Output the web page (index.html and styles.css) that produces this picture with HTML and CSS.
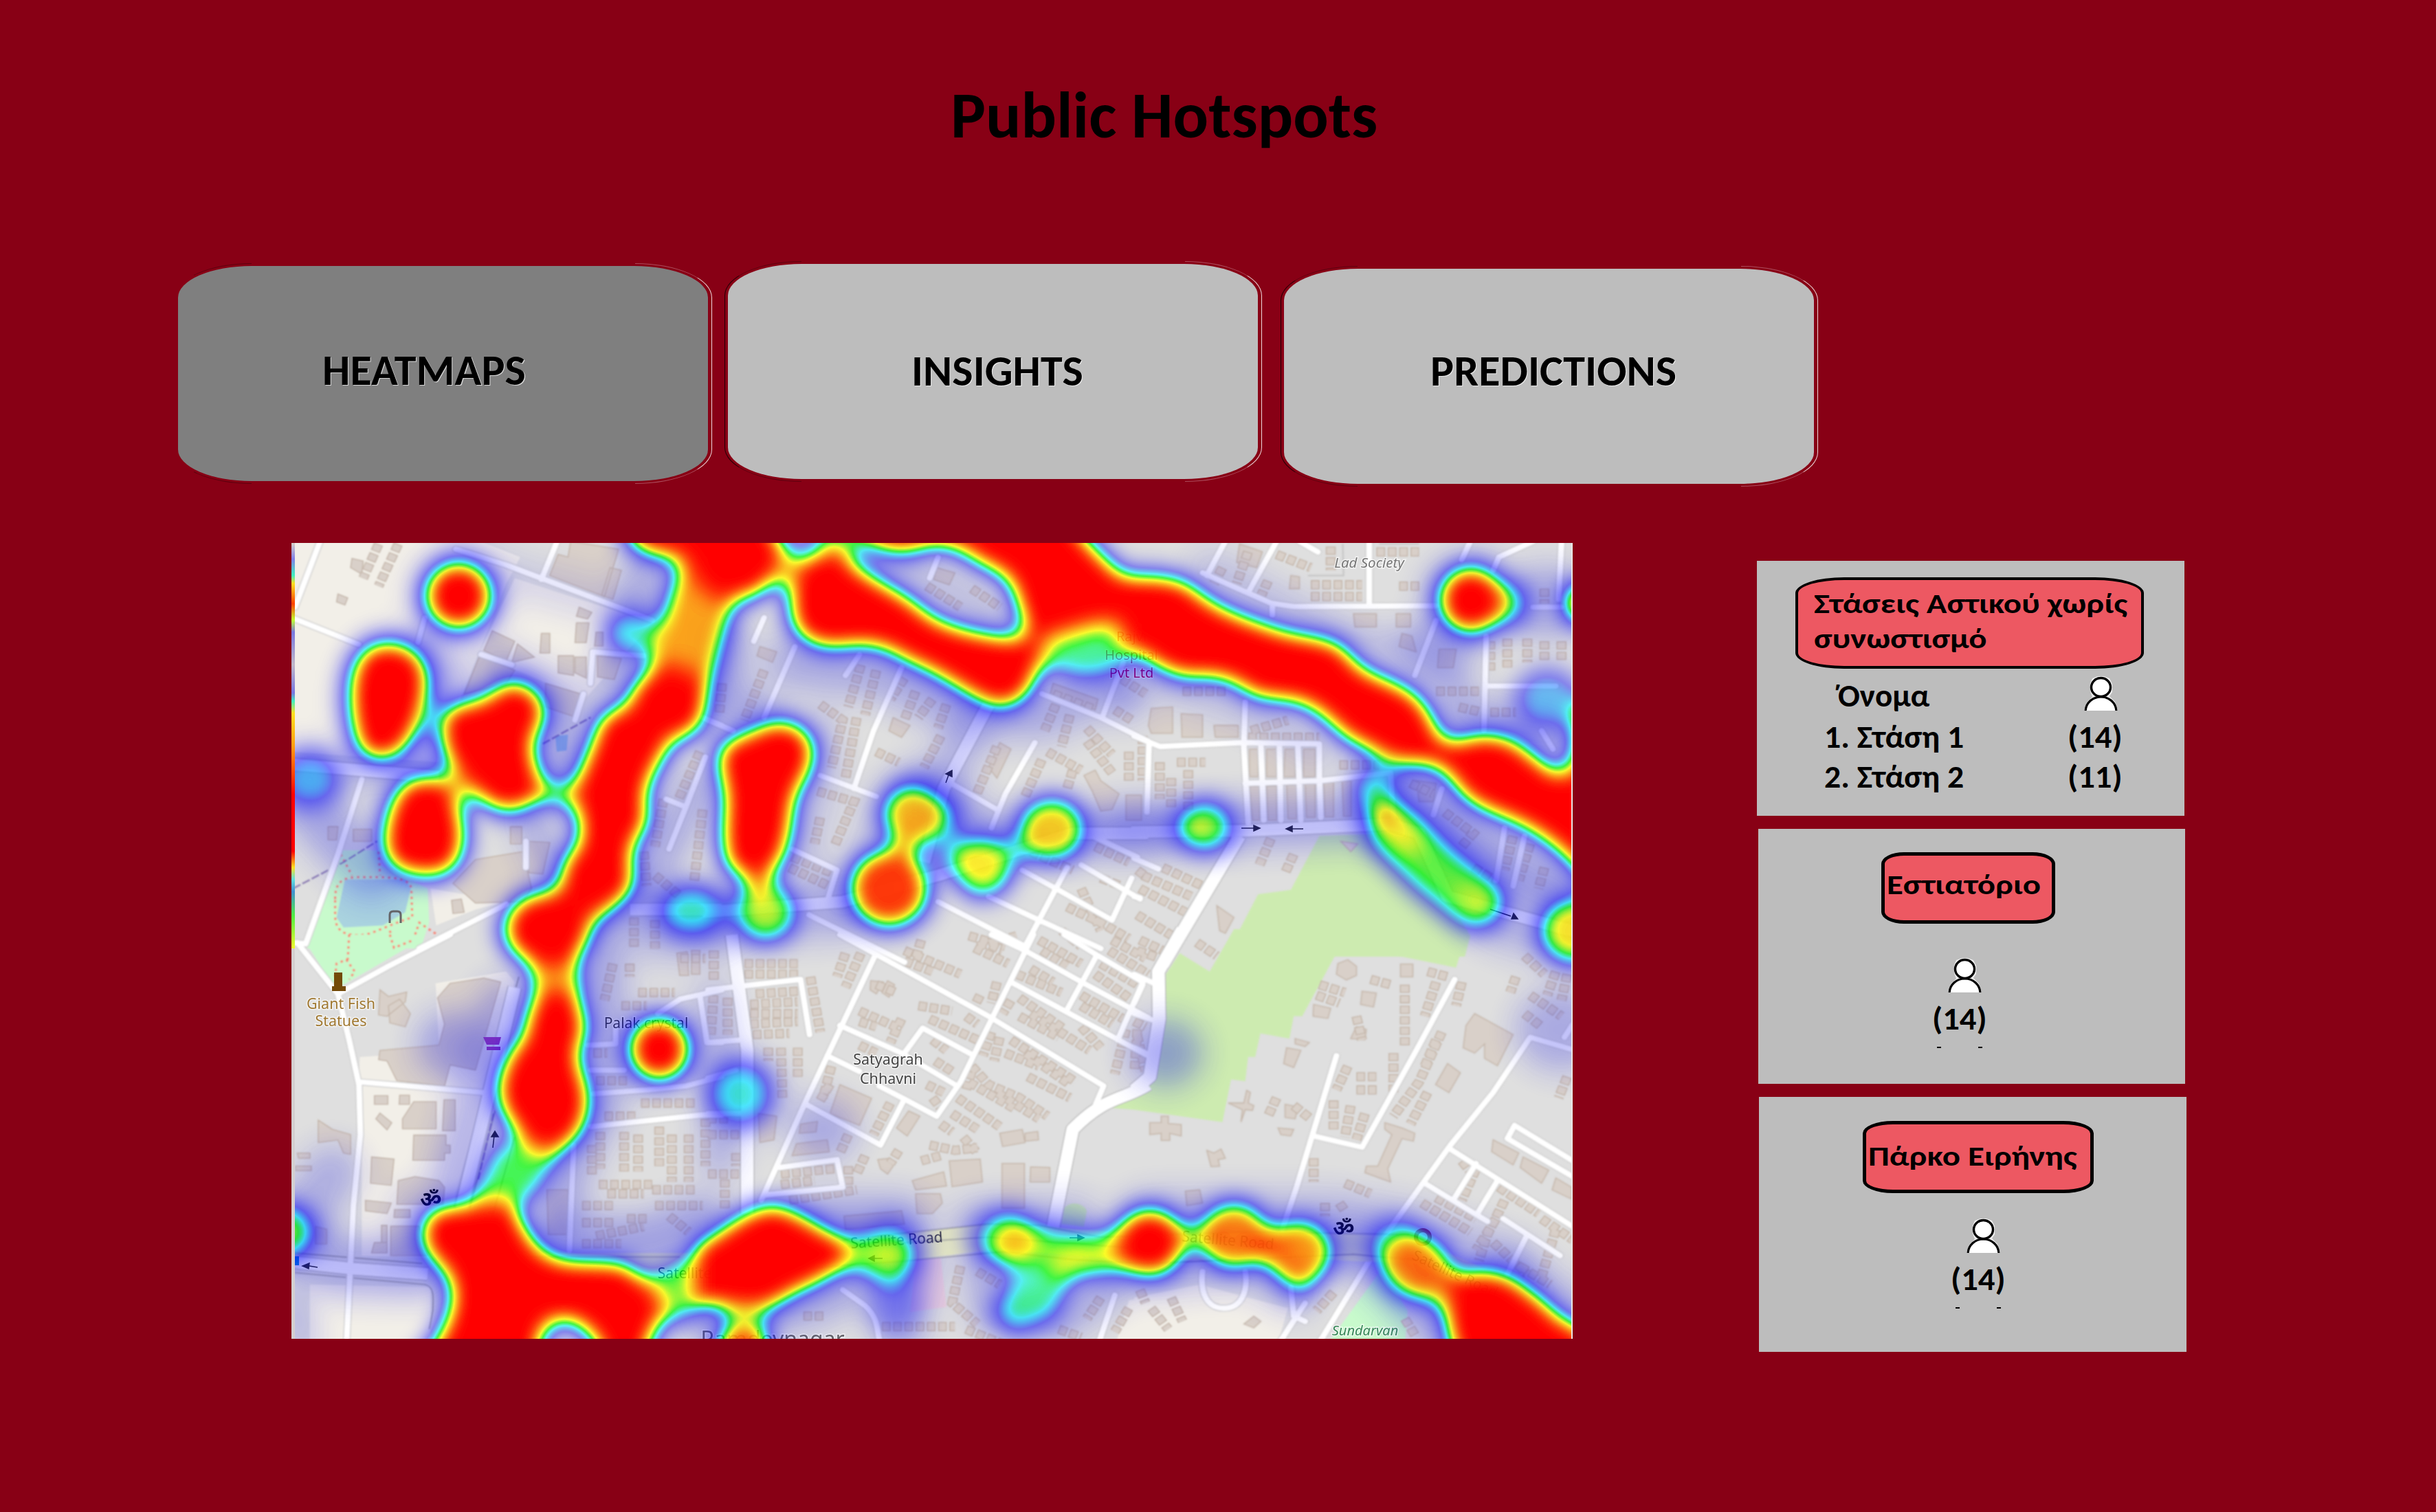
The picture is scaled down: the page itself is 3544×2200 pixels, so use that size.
FILE: index.html
```html
<!DOCTYPE html>
<html lang="el">
<head>
<meta charset="utf-8">
<title>Public Hotspots</title>
<link rel="stylesheet" href="styles.css">
</head>
<body>
<svg class="sprite" width="0" height="0" aria-hidden="true">
  <symbol id="person" viewBox="0 0 49 50">
    <path d="M9 10 L12 3 L20 0 H29 L37 3 L41 11 L41 23 L37 29 L45 37 L49 50 H0 L4 38 L12 30 L9 22Z" fill="#fff" opacity=".75"/>
    <path d="M2 52 C2 38 13 30 24.500 30 S47 38 47 52Z" fill="#fff" stroke="#000" stroke-width="3.200"/>
    <ellipse cx="24.500" cy="16" rx="14" ry="13.500" fill="#fff" stroke="#000" stroke-width="3.400"/>
  </symbol>
</svg>

<header class="header"><h1 class="title"><span class="wide-title">Public Hotspots</span></h1></header>

<nav class="tabs">
  <button class="tab tab-heatmaps"><span>HEATMAPS</span></button>
  <button class="tab tab-insights"><span>INSIGHTS</span></button>
  <button class="tab tab-predictions"><span>PREDICTIONS</span></button>
</nav>

<main class="content">
<svg class="map" viewBox="0 0 1864 1158" width="1864" height="1158">
  <defs>
    <filter id="heat" x="0" y="0" width="1864" height="1158" filterUnits="userSpaceOnUse" color-interpolation-filters="sRGB">
      <feGaussianBlur stdDeviation="16"/>
      <feColorMatrix values="0 0 0 1 0  0 0 0 1 0  0 0 0 1 0  0 0 0 1 0"/>
      <feComponentTransfer>
        <feFuncR type="table" tableValues="0 0 0 0 0 0 0 0 1 1 1"/>
        <feFuncG type="table" tableValues="0 0 0 0 0 .5 1 1 1 .5 0"/>
        <feFuncB type="table" tableValues="1 1 1 1 1 1 1 0 0 0 0"/>
      </feComponentTransfer>
    </filter>
    <filter id="haze" x="0" y="0" width="1864" height="1158" filterUnits="userSpaceOnUse" color-interpolation-filters="sRGB"><feGaussianBlur stdDeviation="22"/></filter>
    <filter id="soft" x="0" y="0" width="1864" height="1158" filterUnits="userSpaceOnUse"><feGaussianBlur stdDeviation="1"/></filter>
    <linearGradient id="edge" x1="0" y1="0" x2="0" y2="1">
      <stop offset="0" stop-color="#d8d0c8"/><stop offset=".04" stop-color="#8080e8"/><stop offset=".08" stop-color="#40f0c0"/>
      <stop offset=".1" stop-color="#ffe020"/><stop offset=".15" stop-color="#ff4000"/><stop offset=".19" stop-color="#c0ff30"/>
      <stop offset=".22" stop-color="#7878e0"/><stop offset=".3" stop-color="#c0b8c8"/><stop offset=".37" stop-color="#7878e0"/>
      <stop offset=".39" stop-color="#40f0c0"/><stop offset=".42" stop-color="#ffe020"/><stop offset=".5" stop-color="#ffa010"/>
      <stop offset=".62" stop-color="#f00"/><stop offset=".76" stop-color="#f00"/><stop offset=".8" stop-color="#ffe020"/>
      <stop offset=".83" stop-color="#60e0e0"/><stop offset=".86" stop-color="#4090d0"/><stop offset=".92" stop-color="#50f040"/><stop offset="1" stop-color="#f0ff30"/>
    </linearGradient>
    <!-- each quadrant of the map carries its own coordinate grid -->
    <g id="rows">
      <g transform="translate(-14 -10) scale(.4082 .3827)">
        <path d="M345 30 L290 160 M415 30 L345 190"/>
        <path d="M1290 1200 L1300 1330 M1360 1000 L1330 1180 M1500 1040 L1470 1310 M1330 1290 L1420 1370"/>
        <path d="M1490 820 L1410 1010 M1255 1450 V1568 M1330 1460 V1568"/>
      </g>
      <g transform="translate(606 -10) scale(.4082 .3827)">
        <path d="M545 490 L500 650 M600 510 L560 680 M700 540 L650 620 M740 590 L700 700 M800 620 L750 690 M850 640 L820 730"/>
        <path d="M830 760 L770 880 M780 190 L900 270 M940 200 L1040 270 M400 640 L480 700 L440 880 M530 690 L490 920 M600 820 L680 860 M50 560 L40 680 M200 510 L130 700"/>
        <path d="M390 970 L520 1010 L450 1180 M400 1070 L380 1170 M300 1220 L440 1280 M290 1260 L430 1330"/>
        <path d="M1030 800 L950 1000 M1240 640 L1200 740 M1290 680 L1260 800 M1210 820 L1330 890 M1350 730 L1440 830 M1190 850 L1130 990 M1300 890 L1280 960 M1350 780 L1440 900 M1500 820 V930"/>
        <path d="M1150 1200 L1300 1270 M1380 1180 L1500 1240 M1280 1410 L1400 1470 L1500 1530 M930 1520 L1060 1560 M960 1560 L1100 1520 M1260 1500 L1330 1560 M1400 1300 L1470 1330 M1530 1270 L1568 1300 M1330 1340 L1400 1500"/>
        <path d="M1440 520 L1560 600 M1230 600 L1380 660 M1450 660 L1510 700"/>
      </g>
      <g transform="translate(1226 -10) scale(.4145 .3827)">
        <path d="M620 185 H800 M620 230 H800 M690 40 V130 M850 60 H1000 M930 190 H1010 M310 120 L280 180 M400 60 L360 180 M500 70 L620 120 M470 170 L440 240"/>
        <path d="M170 590 H330 M410 740 L540 700 M400 765 H650 M30 760 V930 M90 860 V1000 M150 860 H250 M130 920 V1030 M190 890 V1040"/>
        <path d="M1250 400 V520 M1310 390 V500 M1380 390 V480 M1440 400 V480 M1500 400 V480 M1060 590 H1210 M1140 650 L1220 670 M1250 670 H1340 M1440 200 V260"/>
        <path d="M480 1150 L440 1250 M560 1210 L530 1280 M30 1290 L200 1370 M20 1340 L180 1430 M100 1260 L260 1340 M10 1440 L150 1530"/>
        <path d="M1090 1050 L1190 1130 L1150 1180 M1330 1140 L1300 1270 M1390 1170 L1350 1310 M1440 1260 L1420 1340 M970 940 L1050 980 M720 870 H860 M1190 1260 L1270 1310"/>
      </g>
      <g transform="translate(-14 570) scale(.4082 .3827)">
        <path d="M1420 90 H1510 M1180 110 L1150 250 M1240 110 V160 M1270 220 H1400 M1210 270 H1300 M1110 450 H1160 M1120 555 H1230 M1280 640 H1480 M1150 690 H1260"/>
        <path d="M1220 750 V900 M1270 760 V900 M1345 730 V880 M1135 750 V890 M1105 800 V920 M1130 950 H1320 M1160 985 H1290 M1320 970 H1480 M1070 1030 H1180 M1070 1095 H1190 M1120 1145 L1290 1110 M1070 1175 H1210 M1330 1030 H1500 M1380 1070 L1450 1130 M1230 1080 H1300"/>
        <path d="M1510 700 V880 M1390 760 V940 M1450 760 V940 M1540 60 V170"/>
      </g>
      <g transform="translate(606 570) scale(.4082 .3827)">
        <path d="M490 70 L460 160 M545 70 L490 200 M130 110 H320 M130 150 H330 M170 225 L320 215 M150 265 L320 255 M150 300 H320 M150 340 L320 330 M160 380 L290 375 M365 160 L400 370 M20 230 L10 380 M70 240 V380 M20 60 V180"/>
        <path d="M215 430 V480 M260 430 L265 620 M320 430 V540 M540 290 L690 360 M540 330 L600 350 M690 320 L650 410 M600 190 L670 220 M750 270 L870 290 M790 320 L960 400 M920 310 L960 340 M700 60 L900 150 M700 100 L800 140 M760 20 L740 90"/>
        <path d="M800 400 L850 440 M810 480 L870 520 M440 500 L410 620 M400 630 L440 560 M540 420 L600 450 M650 640 L590 760 M780 570 L840 600 M800 620 L830 660"/>
        <path d="M1010 370 L980 460 M1040 390 L1020 480 M1080 400 L1310 560 M1060 450 L1180 500 M1130 450 L1290 570 M1140 540 L1290 620 M940 500 L1000 570 L1110 620 L1210 690 M890 620 L1040 730 M930 560 L1090 660 M870 680 L960 740 M1030 600 L1180 700 M940 520 L920 590"/>
        <path d="M970 230 L950 270 M1030 180 L1010 260 M1080 250 L1050 300 M1110 240 L1270 360 M1150 300 L1360 440 M1110 310 L1250 390 M1100 150 L1260 220 M1150 130 L1230 180 M1330 230 L1480 320 M1330 270 L1440 340 M1400 110 L1530 190 M1380 150 L1500 240"/>
        <path d="M950 50 L1070 110 M970 20 L1050 60 M1180 20 L1330 110 M1190 60 L1280 120 M1440 20 L1560 90 M1430 60 L1568 150 M1330 350 L1400 430 M1490 360 L1450 530 M1530 360 L1520 520"/>
        <path d="M500 760 L470 830 M560 840 L530 910 M500 880 V960 M260 910 L450 890 M260 950 L380 935 M290 1010 L530 970 M680 820 L650 870 M790 800 L880 820 L960 810 M830 720 L870 750 M760 860 L830 840 M910 770 L960 830"/>
        <path d="M0 760 H120 M0 700 H80 M0 910 H110 M60 930 V1040 M100 830 V880 M620 1490 H880 M340 1450 H420 M900 1260 L870 1400 L960 1480 M960 1280 L1040 1330 M920 1500 L1060 1560 M1400 1380 L1350 1460 M1500 1420 L1450 1510 M1250 1500 L1330 1530"/>
      </g>
      <g transform="translate(1226 570) scale(.4145 .3827)">
        <path d="M20 20 L100 60 M10 60 L90 90 M220 30 L290 80 M650 190 L740 220 M640 230 L720 260 M830 170 L900 190 M950 190 V430 M910 450 V600 M1060 180 L1020 310 M1150 180 L1130 270 M1030 140 L1100 160"/>
        <path d="M1080 370 L1000 560 L910 690 M1060 400 L1020 500 M1030 600 L970 720 M750 500 L710 590 M780 540 H850 M700 630 V740 M760 650 L740 770 M810 680 L780 780 M780 590 H860"/>
        <path d="M500 620 L470 690 M560 650 L620 700 M780 310 L800 400 M630 850 V940 M740 945 L830 985 M670 1020 V1070 M720 1020 L740 1050 M0 330 L40 350 M10 380 L40 520"/>
        <path d="M1010 1020 L1180 1130 M1060 1000 L1200 1080 M1150 860 L1180 900 M1200 890 L1150 1010 M1280 960 L1420 1060 M1300 1010 L1240 1140 L1210 1240 M1270 1080 L1200 1200 M1430 1080 L1540 1160 M1480 1120 L1430 1300 M1260 1170 L1380 1290 M1320 1240 L1460 1330"/>
        <path d="M1370 80 L1440 150 M1340 160 L1320 220 M1480 140 L1450 230 M1520 150 L1500 250 M1390 230 L1500 310 M1370 300 L1430 350 M1520 540 L1490 620 M60 1420 L120 1500 M130 1380 L170 1470 M20 1350 L40 1400 M700 1360 L640 1430 M950 1460 L990 1530"/>
      </g>
    </g>
    <g id="blocks">
      <g transform="translate(-14 -10) scale(.4082 .3827)">
        <path d="M1030 20 L1200 50 L1150 230 L955 150 L985 70 L1020 80Z M1170 120 L1210 130 L1180 240 L1140 225Z M750 360 L830 400 L800 475 L720 435Z M840 410 L900 460 L820 480Z M925 370 H955 V445 H920Z M985 455 H1040 V530 L985 520Z M1060 270 L1105 290 L1090 315 L1050 305Z M1050 330 H1095 L1085 405 H1045Z M1120 365 H1145 V418 H1115Z M1045 460 H1085 V540 L1045 520Z M1125 455 L1210 465 L1185 545 L1125 535Z M250 85 L290 95 L285 145 L245 120Z M200 220 L235 235 L225 262 L195 250Z M610 1320 L690 1230 L860 1200 L890 1340 L860 1390 L690 1395Z M870 1160 L955 1165 L930 1285 L880 1280Z M815 1105 H855 V1170 H815Z M605 1385 L640 1380 L650 1430 L610 1435Z M255 1115 H320 V1160 H255Z M165 1105 H200 L195 1155 H165Z M940 560 L1065 600 L1040 685 L940 650Z M705 455 L830 510 L800 560 L650 600Z"/>
      </g>
      <g transform="translate(606 -10) scale(.4082 .3827)">
        <path d="M815 120 L880 140 L860 185 L805 165Z M1340 910 L1380 890 L1400 930 L1465 980 L1440 1040 L1400 1045 L1370 970Z M1490 985 H1545 V1080 H1490Z M1230 560 L1390 620 L1380 660 L1220 600Z M1040 785 L1080 810 L1030 920 L1000 880Z M660 690 L720 720 L690 765 L645 740Z M185 420 L245 440 L230 480 L175 455Z"/>
      </g>
      <g transform="translate(1226 -10) scale(.4145 .3827)">
        <path d="M370 30 L450 60 L430 120 L360 100Z M60 655 L135 650 V750 H60 L50 720Z M165 675 L240 680 V765 H168Z M280 720 H365 V765 H285Z M770 295 H850 V345 H775Z M920 295 H970 V345 H920Z M940 370 L975 380 L990 440 L930 420Z M1070 430 H1130 L1120 500 H1065Z M550 150 L580 155 V200 H545Z M990 930 L1060 940 L1050 1010 H1000Z M405 810 H435 V915 H405Z M465 810 H500 V915 H465Z M530 810 H565 V915 H525Z M595 810 H635 V915 H595Z M405 950 H440 V1080 H415Z M465 950 H500 V1080 H470Z M535 945 H570 V1075 H540Z M600 940 H635 V1070 H605Z M665 935 H700 V1068 H670Z M730 930 H762 V1065 H735Z M290 1405 L350 1450 L320 1510 L300 1500Z M725 1160 L785 1170 L760 1200Z"/>
      </g>
      <g transform="translate(-14 570) scale(.4082 .3827)">
        <path d="M600 185 L720 165 L780 180 L690 515 L600 495 L580 575 L410 555 L375 480 L345 475 L350 440 L560 420 L580 340 L555 240Z M470 635 H550 V738 H430 L430 700Z M578 628 H618 V745 H573Z M470 762 H585 V800 H600 V830 H580 V858 H467Z M320 845 L400 853 L390 953 L316 945Z M415 935 L475 920 L560 935 L580 960 L575 1025 H410Z M298 1010 L390 1020 L375 1060 L298 1050Z M402 1045 H457 V1075 H400Z M388 1108 H490 L520 1220 H388Z M330 1170 H375 V1210 H320Z M355 1105 H375 V1170 H355Z M330 612 H378 V645 H330Z M420 610 H455 V645 H418Z M350 678 L392 715 L375 742 L335 700Z M130 705 L180 740 L245 760 L245 835 L220 830 L200 780 L130 790Z M350 210 L380 235 L445 218 L440 255 L375 310 L345 305Z M380 270 L420 245 L458 300 L440 350 L385 335Z M1408 70 L1445 65 L1450 155 L1418 155Z M1460 60 H1490 V150 H1460Z M50 880 H105 V897 H50Z M55 830 H100 V850 H60Z M120 1110 L160 1120 V1175 H120Z M945 970 H1020 V1140 H950Z"/>
      </g>
      <g transform="translate(606 570) scale(.4082 .3827)">
        <path d="M470 570 L583 622 L540 725 L435 680Z M315 795 L425 780 L432 825 L300 840Z M715 670 L755 690 L710 765 L672 735Z M860 860 L970 853 L978 940 L870 958Z M1048 870 H1128 V1040 H1048Z M1150 883 L1218 885 V940 H1148Z M1040 755 L1120 740 L1130 790 L1050 805Z M1130 755 L1175 748 L1178 780 L1130 785Z M728 935 L840 902 L850 955 L740 970Z M740 985 L828 985 L835 1020 L800 1060 H745Z M605 855 L650 850 L660 880 L640 910 L615 890Z M180 680 L245 690 L235 780 L185 790Z M580 175 L625 180 L600 225 L578 210Z M640 175 L665 190 L645 238 L620 220Z M485 1070 L690 1050 L700 1100 L490 1120Z M330 720 L390 710 L385 750 L325 755Z"/>
      </g>
      <g transform="translate(1226 570) scale(.4145 .3827)">
        <path d="M715 110 L750 95 L780 120 L780 155 L745 172 L710 150Z M935 112 H978 V160 H935Z M800 215 L850 222 L840 275 L795 265Z M630 265 L690 280 L680 318 L628 310Z M1195 300 L1330 380 L1275 498 L1230 470 V415 L1195 450 L1155 430 L1165 345Z M1100 490 L1145 525 L1105 600 L1058 570Z M535 430 L585 440 L560 505 L525 490Z M55 715 L95 715 V690 H120 V718 L165 722 V765 L125 755 V782 H95 V755 L55 760Z M395 592 L408 600 L400 640 L420 650 L415 668 L390 665 L375 712 L380 665 L330 640 L385 640Z M255 820 L280 830 L305 815 L320 850 L295 855 L300 880 L270 882Z M880 715 L940 735 L985 755 L980 785 L940 775 L890 890 L900 940 L810 905 L815 880 L855 880 L905 760 L880 740Z M1260 780 L1350 830 L1330 875 L1255 825Z M1365 845 L1455 895 L1430 945 L1355 885Z M1480 925 L1535 960 V1005 L1467 970Z M505 735 L560 740 L550 765 L515 760Z M385 1480 L420 1450 L445 1470 L420 1495Z M180 975 L230 970 L240 1020 L185 1030Z M530 645 L575 655 L565 700 L530 695Z M780 350 L815 360 L810 400 L760 395Z M565 395 L615 410 L600 425 L565 415Z"/>
      </g>
    </g>
    <g id="streets">
      <g transform="translate(-14 -10) scale(.4082 .3827)">
        <path d="M140 10 L47 270 M40 312 L275 412 M620 50 L800 110 L1320 320 M985 10 L925 165 M510 310 L485 405 M1100 560 L1108 440 L1290 455 M1075 600 L1045 700 M710 450 L820 490 M285 925 L200 1210 L85 1550 L30 1545 M1510 840 L1440 1030 L1380 1190 M1370 1000 L1440 1030 M490 1568 L800 1400 M870 1160 V1260 M1500 690 L1568 720"/>
      </g>
      <g transform="translate(606 -10) scale(.4082 .3827)">
        <path d="M0 700 L90 740 M200 310 L163 400 M310 420 L200 690 M820 80 L790 160 M540 450 L490 530 M690 500 L590 740 L520 960 M400 910 L600 990 M1165 785 L1060 980 L1010 1110 M850 930 L1030 1040 M1190 600 L1400 690 L1568 780 M1480 480 L1405 690 M300 1190 L460 1270 L430 1370 M360 1440 L700 1620 M1120 1270 L1240 1340 L1440 1460 L1510 1300 M1000 1370 L1180 1460 L1400 1568 M820 1390 L1130 1560 L1240 1340 L1280 1260 M1370 1140 L1530 1220 M1330 1250 L1540 1380"/>
      </g>
      <g transform="translate(1226 -10) scale(.4145 .3827)">
        <path d="M320 20 L255 150 M500 20 L405 205 M580 20 L645 60 M825 20 V260 M240 140 L480 255 L560 268 L1060 265 M485 270 V300 M1180 20 L1150 90 M1400 20 L1280 80 L1260 130 M1500 20 L1490 240 M1060 320 L985 530 M1235 380 L1228 740 M1240 570 H1480 M0 760 L90 800 L380 785 L650 790 V920 M390 630 L385 800 L400 1090 M445 800 L455 1080 M510 800 L515 1080 M575 800 L585 1080 M52 795 L45 1050 M390 940 L650 930 L900 900 L910 1080 M650 920 L655 1070 M1400 270 H1500 M1080 960 L1050 1060 M1300 1110 L1270 1310 M1370 1140 L1330 1330 M0 1225 L85 1265 M0 1370 L20 1375 M1430 740 L1470 810"/>
      </g>
      <g transform="translate(-14 570) scale(.4082 .3827)">
        <path d="M55 30 L200 225 L240 400 L275 570 L280 760 L255 1030 L230 1568 M200 225 L380 120 L600 0 M280 560 L500 580 L720 600 M1090 420 L1190 415 V350 M1340 300 L1420 245 L1568 210 M1490 230 L1515 410 H1568 M1100 515 H1220 M1110 605 L1300 590 L1440 575 L1568 540 M1100 730 L1500 685 H1568 M1040 800 L1025 1200"/>
      </g>
      <g transform="translate(606 570) scale(.4082 .3827)">
        <path d="M0 210 L330 170 L362 380 M0 410 L120 400 M0 545 L100 515 M0 680 H150 M470 0 L600 75 L1000 310 L1410 575 L1380 650 M595 80 L350 630 L190 1010 M470 345 L690 450 L880 570 M700 450 L765 355 L940 455 M425 460 L540 520 M610 575 L700 625 L815 690 L900 560 L1160 0 M700 625 L615 800 L350 645 M255 885 L460 855 L480 960 L200 990 M1010 0 L1130 60 L1340 185 L1568 315 M1080 180 L1280 295 L1568 460 M1280 285 L1385 80 M1270 0 L1390 80 L1550 180 L1460 400 M480 1350 L560 1410 C610 1460 600 1500 615 1560 M1450 1370 L1390 1560"/>
      </g>
      <g transform="translate(1226 570) scale(.4145 .3827)">
        <path d="M1125 170 L985 450 L800 808 L630 765 M710 460 L570 960 L520 1120 M1550 440 L1390 390 L1260 600 L1110 800 L870 1160 L640 1568 M1110 815 L1540 1110 M1200 870 L1125 1000 M1020 945 L1240 1090 M1275 935 L1205 1060 M1540 860 L1335 725 L1310 775 L1540 920 M1295 1080 L1495 1220 M1375 1150 L1310 1290 M1510 390 L1540 340 M0 150 L70 185 M0 300 L80 330 M0 430 L60 460 M30 190 L0 260 M600 1400 L500 1568 M240 1280 C230 1370 260 1420 315 1420 C380 1420 400 1350 390 1280 M550 1340 L560 1450 L600 1470"/>
      </g>
    </g>
    <g id="avenues">
      <g transform="translate(-14 -10) scale(.4082 .3827)"><path d="M0 865 L560 915 M1240 1420 H1568"/></g>
      <g transform="translate(606 -10) scale(.4082 .3827)"><path d="M1000 640 L840 960 L770 1240 M-20 1430 L480 1390 L820 1290 L1300 1130 H1568"/></g>
      <g transform="translate(1226 -10) scale(.4145 .3827)"><path d="M-10 1125 L400 1120 L900 1095 L1000 1130 L1100 1370 L1400 1460 L1568 1510 M370 1140 L100 1630"/></g>
      <g transform="translate(-14 570) scale(.4082 .3827)"><path d="M0 1240 L250 1270 L520 1290 M830 200 L640 1040"/></g>
      <g transform="translate(606 570) scale(.4082 .3827)"><path d="M85 0 L140 440 L140 1060 M1568 570 C1480 630 1420 610 1300 740 L1230 1110"/></g>
      <g transform="translate(1226 570) scale(.4145 .3827)"><path d="M170 -20 L85 140 L88 320 L55 540 L0 590"/></g>
    </g>
  </defs>

  <rect width="1864" height="1158" fill="#dfdfdf"/>
  <g filter="url(#soft)">
    <!-- land use -->
    <g transform="translate(-14 -10) scale(.4082 .3827)">
      <path d="M30 0 H660 L850 80 L800 180 L640 610 L560 860 L30 820Z M830 160 L1320 330 L1080 620 L700 450Z M530 1340 L800 1390 L690 1420 L550 1480Z" fill="#f2efe8"/>
      <path d="M210 1195 H345 L350 1250 L520 1340 L525 1470 L495 1568 H90Z" fill="#c8facc"/>
      <path d="M225 1305 H440 L460 1340 L440 1430 L360 1480 L220 1488 L195 1450Z" fill="#aad3df"/>
      <path d="M975 760 L1020 755 L1015 815 L980 820Z" fill="#9cc4e4"/>
      <path d="M190 1380 C190 1300 230 1295 300 1297 C400 1295 465 1300 462 1350 L465 1450 C400 1470 350 1500 300 1515 C220 1525 190 1500 190 1440Z M345 1200 L350 1290 M210 1210 L250 1290 M385 1500 L400 1560 L470 1530 L490 1470 L560 1520 M240 1520 V1568" class="footway"/>
      <path d="M40 1340 L220 1240 L340 1160 M930 790 L1100 690" class="railway"/>
    </g>
    <g transform="translate(1226 -10) scale(.4145 .3827)">
      <path d="M650 1140 L900 1130 L1100 1380 L1180 1520 L1160 1600 H320 L435 1362 L550 1345Z" fill="#cdebb0"/>
      <path d="M610 150 H735 L732 30 M1000 30 H860" class="parcel"/>
    </g>
    <g transform="translate(-14 570) scale(.4082 .3827)">
      <path d="M85 30 L95 0 H505 L495 20 L220 190 L190 200 L140 120Z" fill="#c8facc"/>
      <path d="M548 185 L800 140 L830 180 L720 600 L275 555 L278 465 L350 460 L560 420Z M285 570 L720 605 L620 980 L580 1230 L285 1220Z M100 1330 L530 1340 V1568 H100Z" fill="#f2efe8"/>
      <path d="M190 160 L195 110 L230 95 L260 140 L240 170 M240 0 L235 95 M385 0 L400 50 L470 20" class="footway"/>
      <path d="M47 1210 L500 1250 M47 1285 L510 1330 C545 1340 540 1380 538 1430 L525 1500 M760 670 L670 1040 M830 770 L740 1110 M845 160 L740 560" class="casing"/>
      <path d="M755 680 L700 930" class="railway"/>
    </g>
    <g transform="translate(1226 570) scale(.4145 .3827)">
      <path d="M160 70 L265 140 L350 -20 H1170 L1130 125 L900 75 L710 70 L590 310 H560 L545 395 L443 375 L425 465 L400 465 L390 557 L340 550 L310 712 L0 665 L-130 655 L60 540 L110 320 L112 150Z" fill="#cdebb0"/>
      <path d="M870 1270 L960 1430 L950 1568 H670Z" fill="#c8facc"/>
      <path d="M0 1380 L230 1330 L540 1420 L500 1568 H0Z" fill="#f2efe8"/>
    </g>
    <g transform="translate(606 570) scale(.4082 .3827)">
      <path d="M1500 1390 L1568 1380 V1568 H1450Z" fill="#f2efe8"/>
      <path d="M1270 1040 C1290 1010 1340 1020 1350 1050 L1340 1110 L1260 1100Z M1568 600 L1460 655 L1568 670Z" fill="#cdebb0"/>
      <path d="M740 1230 H830 L850 1415 L720 1435Z" fill="#ebd0dc"/>
    </g>
    <use href="#blocks" class="block"/>
    <use href="#rows" class="row-edge"/>
    <use href="#rows" class="row-face"/>
    <use href="#streets" class="street-edge"/>
    <use href="#avenues" class="avenue-edge"/>
    <use href="#streets" class="street-face"/>
    <use href="#avenues" class="avenue-face"/>
    <!-- Satellite Road -->
    <g transform="translate(606 570) scale(.4082 .3827)">
      <path d="M-700 1260 L200 1260 L500 1215 L1000 1150 L1200 1160 L1568 1190 L2100 1180 L2500 1200 L2800 1340" fill="none" stroke="#f7fabf" stroke-width="100"/>
      <path d="M480 1160 L1000 1100 L1180 1105 L1400 1150 L1900 1130 L2500 1140 M200 1280 L700 1240 L1050 1205 L1300 1235 L1560 1250 L2300 1215 L2560 1240 M500 1185 L1000 1150 L1500 1190 M-700 1225 H-100" class="casing"/>
    </g>
  </g>

  <!-- markers and place names, under the heat layer -->
  <g class="labels">
    <path d="M62 625 h12 v20 h5 v7 h-20 v-7 h3Z" fill="#734a08"/>
    <text x="72" y="678" class="poi">Giant Fish</text>
    <text x="72" y="703" class="poi">Statues</text>
    <text x="516" y="706" class="hamlet">Palak crystal</text>
    <text x="868" y="759" class="place">Satyagrah</text>
    <text x="868" y="787" class="place">Chhavni</text>
    <text x="1568" y="36" class="quiet">Lad Society</text>
    <text x="1222" y="143" class="clinic">Rajvi</text>
    <text x="1222" y="170" class="clinic">Hospital</text>
    <text x="1222" y="196" class="clinic">Pvt Ltd</text>
    <text x="881" y="1022" class="road" transform="rotate(-4 881 1022)">Satellite Road</text>
    <text x="600" y="1070" class="road">Satellite Road</text>
    <text x="1362" y="1022" class="road" transform="rotate(5 1362 1022)">Satellite Road</text>
    <text x="1690" y="1070" class="road" transform="rotate(25 1690 1070)">Satellite Road</text>
    <text x="1562" y="1153" class="garden">Sundarvan</text>
    <text x="700" y="1170" class="town">Ramdevnagar</text>
    <text x="203" y="965" class="om">ॐ</text>
    <text x="1531" y="1007" class="om">ॐ</text>
    <circle cx="1646" cy="1010" r="10" fill="none" stroke="#a0403c" stroke-width="6"/>
    <path d="M279 719 h26 l-3 11 h-18Z M284 733 h20 v5 h-20Z" fill="#ac39ac"/>
    <path d="M143 553 v-12 q0 -5 5 -5 h6 q5 0 5 5 v12" fill="none" stroke="#666" stroke-width="3"/>
    <g class="arrow">
      <path d="M1382 415 h20"/><path d="M1400 411 l9 4 l-9 4Z"/>
      <path d="M1472 416 h-18"/><path d="M1456 412 l-9 4 l9 4Z"/>
      <path d="M952 349 l5 -14"/><path d="M952 336 l9 4 v-9Z"/>
      <path d="M38 1054 l-12 -2"/><path d="M26 1048 l-10 4 l9 4Z"/>
      <path d="M860 1041 h-14"/><path d="M848 1037 l-8 4 l8 4Z"/>
      <path d="M1132 1011 h14"/><path d="M1144 1007 l9 4 l-9 4Z"/>
      <path d="M1744 533 l30 10"/><path d="M1778 539 l6 8 l-9 0Z"/>
      <path d="M293 880 l2 -18"/><path d="M291 864 l5 -8 l5 8Z"/>
    </g>
    <rect x="5" y="1038" width="6" height="13" fill="#0092da"/>
  </g>

  <!-- weak background activity, plain blue -->
  <g filter="url(#haze)" class="haze">
    <g transform="translate(-14 -10) scale(.4082 .3827)">
      <path d="M950 1430 H1568" stroke-width="170" opacity=".33"/>
      <path d="M60 860 L560 910" stroke-width="130" opacity=".3"/>
      <path d="M60 980 L230 1180 L320 1280" stroke-width="200" opacity=".36"/>
      <path d="M500 430 L600 560 L540 800" stroke-width="150" opacity=".36"/>
      <path d="M640 100 L1320 300" stroke-width="130" opacity=".16"/>
      <path d="M780 500 L1000 620 L1000 880" stroke-width="150" opacity=".34"/>
      <path d="M1320 60 L1240 330 L1180 560" stroke-width="150" opacity=".3"/>
      <path d="M880 1060 L1000 1330" stroke-width="130" opacity=".3"/>
      <path d="M1480 950 L1340 1250 L1300 1400" stroke-width="130" opacity=".34"/>
      <ellipse cx="630" cy="227" rx="170" ry="180" opacity=".25"/>
      <ellipse cx="380" cy="620" rx="180" ry="260" opacity=".2"/>
    </g>
    <g transform="translate(606 -10) scale(.4082 .3827)">
      <path d="M760 960 L1000 1150 L1568 1120" stroke-width="180" opacity=".38"/>
      <path d="M300 480 L620 520 L900 660 L1180 680 L1420 580" stroke-width="190" opacity=".32"/>
      <path d="M950 700 L830 960" stroke-width="150" opacity=".28"/>
      <path d="M60 380 L60 640 L200 690" stroke-width="160" opacity=".36"/>
      <path d="M400 700 L420 900 L340 1200 L480 1430" stroke-width="100" opacity=".22"/>
      <path d="M560 60 L860 200 L1030 320" stroke-width="100" opacity=".28"/>
      <path d="M1480 560 L1500 640" stroke-width="120" opacity=".3"/>
      <path d="M-50 1450 L480 1430" stroke-width="200" opacity=".28"/>
      <path d="M730 1060 L645 1340" stroke-width="320" opacity=".24"/>
    </g>
    <g transform="translate(1226 -10) scale(.4145 .3827)">
      <circle cx="1450" cy="250" r="140" opacity=".33"/>
      <path d="M-40 1110 L850 1080" stroke-width="180" opacity=".38"/>
      <path d="M900 1040 L1130 1260 L1300 1420 L1568 1500" stroke-width="290" opacity=".28"/>
      <path d="M850 850 L1020 960 L1180 1160 L1500 1330" stroke-width="160" opacity=".34"/>
      <path d="M260 120 L520 270 L780 400 L1020 440 L1130 560" stroke-width="110" opacity=".26"/>
      <path d="M40 540 L400 660 L640 820" stroke-width="110" opacity=".24"/>
      <circle cx="1060" cy="440" r="130" opacity=".28"/>
      <circle cx="1182" cy="243" r="175" opacity=".25"/>
      <path d="M1150 680 L1480 760" stroke-width="160" opacity=".36"/>
    </g>
    <g transform="translate(-14 570) scale(.4082 .3827)">
      <circle cx="610" cy="420" r="130" opacity=".38"/>
      <path d="M0 1150 L200 1260 L500 1270" stroke-width="220" opacity=".38"/>
      <path d="M60 1100 L180 900" stroke-width="200" opacity=".3"/>
      <path d="M40 1380 L80 1560" stroke-width="70" opacity=".4"/>
      <path d="M790 250 L700 600 L600 980" stroke-width="160" opacity=".36"/>
      <path d="M1150 60 L1150 640 L1030 880 L980 1100" stroke-width="150" opacity=".34"/>
      <path d="M1000 1160 L1300 1170 L1500 1090" stroke-width="200" opacity=".38"/>
      <path d="M460 1020 L440 1240" stroke-width="110" opacity=".28"/>
      <path d="M1300 40 H1568" stroke-width="120" opacity=".22"/>
      <circle cx="1345" cy="435" r="160" opacity=".25"/>
    </g>
    <g transform="translate(606 570) scale(.4082 .3827)">
      <circle cx="410" cy="740" r="120" opacity=".32"/>
      <path d="M20 250 L60 560 L40 860" stroke-width="140" opacity=".28"/>
      <ellipse cx="130" cy="605" rx="150" ry="150" opacity=".28"/>
      <path d="M960 1110 L1300 1100" stroke-width="190" opacity=".3"/>
      <path d="M980 1250 L1010 1450 L1250 1480 L1460 1320" stroke-width="130" opacity=".34"/>
      <path d="M350 1080 L700 1080 L730 1240 L680 1500" stroke-width="170" opacity=".38"/>
      <path d="M-20 1460 L330 1430 L520 1340" stroke-width="150" opacity=".34"/>
    </g>
    <g transform="translate(1226 570) scale(.4145 .3827)">
      <circle cx="110" cy="450" r="130" opacity=".44"/>
      <circle cx="1500" cy="360" r="160" opacity=".32"/>
      <path d="M60 1110 L700 1110 L980 1160 L1300 1290" stroke-width="260" opacity=".27"/>
      <path d="M740 1180 L880 1260 L1060 1480" stroke-width="200" opacity=".34"/>
      <path d="M60 1300 L400 1270 L560 1370" stroke-width="130" opacity=".3"/>
      <path d="M1300 1250 L1560 1420" stroke-width="130" opacity=".3"/>
    </g>
  </g>

  <!-- heat intensity; the filter maps opacity to colour -->
  <g filter="url(#heat)" class="heat">
    <g transform="translate(-14 -10) scale(.4082 .3827)">
      <ellipse cx="630" cy="227" rx="137" ry="147"/>
      <path d="M380 385 C480 385 550 470 540 570 C530 680 495 770 445 825 C400 885 290 885 255 805 C225 720 215 600 232 520 C255 430 300 385 380 385Z"/>
      <path d="M820 535 C905 535 965 610 957 690 C950 740 912 770 915 810 C930 870 955 930 930 995 C895 1060 830 1080 765 1058 C695 1035 655 970 605 900 C555 850 545 780 548 710 C560 635 620 615 690 605 C740 585 770 535 820 535Z"/>
      <path d="M500 897 C585 885 630 940 645 1010 C665 1080 685 1150 650 1235 C615 1315 530 1325 455 1305 C375 1290 330 1220 345 1120 C360 1030 390 902 500 897Z"/>
      <path d="M890 965 L1050 990" class="line" stroke-width="115" opacity=".7"/>
      <path d="M590 930 L640 970" class="line" stroke-width="60" opacity=".45"/>
      <circle cx="100" cy="925" r="115" opacity=".54"/>
      <circle cx="1245" cy="370" r="95" opacity=".62"/>
      <circle cx="1375" cy="640" r="158"/>
      <circle cx="1245" cy="775" r="152"/>
      <path d="M1240 780 L1170 960 L1180 1060" class="line" stroke-width="290"/>
      <path d="M1180 1060 L1130 1290" class="line" stroke-width="240"/>
      <circle cx="1125" cy="1290" r="150"/>
      <path d="M1100 1370 L980 1440" class="line" stroke-width="220" opacity=".85"/>
      <path d="M1410 580 L1465 350 L1530 120" class="line" stroke-width="262" opacity=".88"/>
      <ellipse cx="947" cy="1494" rx="172" ry="160"/>
      <ellipse cx="1370" cy="-30" rx="160" ry="130"/>
      <ellipse cx="1460" cy="1425" rx="125" ry="105" opacity=".64"/>
    </g>
    <g transform="translate(606 -10) scale(.4082 .3827)">
      <ellipse cx="100" cy="70" rx="180" ry="190"/>
      <path d="M280 50 L280 150" class="line" stroke-width="80" opacity=".6"/>
      <path d="M345 60 C400 20 480 30 540 95 C600 150 700 190 770 255 C830 320 960 350 1080 365 C1160 360 1215 390 1208 450 C1195 560 1145 675 1030 670 C940 655 860 560 700 495 C620 435 560 430 500 440 C420 455 325 435 288 345 C260 265 270 120 345 60Z"/>
      <path d="M480 -80 L540 30 C610 85 680 90 740 80 C800 45 870 45 960 125 C1030 155 1070 170 1085 270 C1100 340 1130 395 1200 400 C1280 395 1330 345 1450 340 C1500 360 1520 400 1530 440 L1620 440 L1620 160 C1500 170 1480 120 1380 20 L1300 -80Z"/>
      <path d="M400 -20 L500 30" class="line" stroke-width="80" opacity=".7"/>
      <ellipse cx="1350" cy="430" rx="175" ry="125" opacity=".65"/>
      <path d="M250 685 C345 685 405 760 395 840 C390 920 335 960 325 1030 C320 1110 305 1220 258 1278 C210 1330 100 1330 58 1268 C22 1190 35 1090 40 1000 C35 940 10 900 20 830 C35 750 130 735 170 710 C200 695 220 685 250 685Z"/>
      <ellipse cx="205" cy="1430" rx="122" ry="125" opacity=".77"/>
      <circle cx="170" cy="1330" r="60" opacity=".4"/>
      <ellipse cx="730" cy="1060" rx="122" ry="130" opacity=".86"/>
      <ellipse cx="645" cy="1340" rx="155" ry="163" opacity=".96"/>
      <path d="M720 1150 L700 1210" class="line" stroke-width="110" opacity=".35"/>
      <ellipse cx="980" cy="1255" rx="115" ry="128" opacity=".81"/>
      <circle cx="1225" cy="1115" r="132" opacity=".84"/>
      <circle cx="1110" cy="1190" r="70" opacity=".35"/>
      <path d="M850 1040 L865 1240" class="line" stroke-width="110" opacity=".48"/>
    </g>
    <g transform="translate(1226 -10) scale(.4145 .3827)">
      <path d="M-60 130 C60 130 150 125 220 180 C300 260 400 290 500 330 C600 370 720 350 780 450 C830 520 930 520 1010 600 C1080 680 1070 735 1110 765 C1200 720 1300 720 1380 790 C1440 840 1480 880 1510 890 C1530 860 1520 700 1560 620 L1700 620 L1700 1500 C1540 1270 1500 1220 1400 1150 C1300 1080 1220 1080 1140 1000 C1085 930 1075 880 980 890 C880 890 830 830 760 800 C690 760 660 680 560 650 C480 640 440 640 400 620 C330 560 280 550 200 560 C100 550 20 480 -60 400Z"/>
      <ellipse cx="1182" cy="243" rx="130" ry="145"/>
      <circle cx="1300" cy="255" r="95" opacity=".62"/>
      <circle cx="1590" cy="255" r="95"/>
      <circle cx="1450" cy="620" r="120" opacity=".52"/>
      <circle cx="250" cy="1105" r="108" opacity=".74"/>
      <circle cx="180" cy="1110" r="80" opacity=".25"/>
      <path d="M845 960 L862 1030" class="line" stroke-width="160" opacity=".66"/>
      <path d="M920 1120 L1060 1270 L1200 1390" class="line" stroke-width="232" opacity=".72"/>
      <circle cx="950" cy="1140" r="75" opacity=".3"/>
      <circle cx="1205" cy="1395" r="90" opacity=".2"/>
      <circle cx="1550" cy="1500" r="140" opacity=".82"/>
    </g>
    <g transform="translate(-14 570) scale(.4082 .3827)">
      <path d="M970 50 L982 260" class="line" stroke-width="205" opacity=".84"/>
      <ellipse cx="975" cy="350" rx="128" ry="155"/>
      <path d="M860 350 H1085 C1065 430 1075 450 1085 500 C1110 560 1130 640 1100 715 C1065 815 1005 840 950 838 C860 833 790 740 755 640 C740 560 765 500 800 430Z"/>
      <ellipse cx="1345" cy="435" rx="125" ry="137"/>
      <path d="M760 780 L1030 810 L900 1020 L650 1020Z" opacity=".69"/>
      <path fill-rule="evenodd" d="M600 1010 C700 1005 760 1000 830 1010 C890 1080 890 1180 1000 1215 C1080 1230 1180 1215 1240 1240 C1310 1290 1350 1370 1380 1420 L1300 1650 L450 1650 C520 1560 570 1480 585 1400 C600 1300 540 1280 500 1220 C460 1150 470 1020 600 1010Z M935 1640 C930 1540 950 1490 1000 1485 C1060 1490 1120 1560 1130 1640Z"/>
      <circle cx="10" cy="1130" r="115" opacity=".75"/>
      <path d="M1380 1370 L1520 1300" class="line" stroke-width="230" opacity=".7"/>
    </g>
    <g transform="translate(606 570) scale(.4082 .3827)">
      <path d="M-60 1170 C60 1100 130 1012 240 1008 C320 1025 400 1090 450 1115 C525 1155 525 1245 470 1295 C400 1355 320 1370 270 1415 C200 1460 60 1430 -60 1410Z"/>
      <path d="M520 1212 L655 1218" class="line" stroke-width="190" opacity=".62"/>
      <ellipse cx="650" cy="1215" rx="112" ry="145" opacity=".42"/>
      <circle cx="120" cy="1580" r="110" opacity=".95"/>
      <path d="M110 1430 L160 1500" class="line" stroke-width="150" opacity=".5"/>
      <ellipse cx="115" cy="605" rx="120" ry="130" opacity=".62"/>
      <ellipse cx="1060" cy="1155" rx="125" ry="120" opacity=".58"/>
      <path d="M1100 1175 L1300 1215 L1480 1205" class="line" stroke-width="205" opacity=".66"/>
      <ellipse cx="1320" cy="1240" rx="125" ry="75" opacity=".42"/>
      <path d="M1070 1290 L1320 1310 L1240 1470 L1090 1530 L1000 1450Z" opacity=".66"/>
      <ellipse cx="660" cy="1410" rx="100" ry="100" opacity=".3"/>
    </g>
    <g transform="translate(1226 570) scale(.4145 .3827)">
      <ellipse cx="55" cy="1170" rx="136" ry="146"/>
      <path d="M180 1145 L250 1150" class="line" stroke-width="130" opacity=".5"/>
      <ellipse cx="350" cy="1145" rx="134" ry="140" opacity=".9"/>
      <path d="M450 1190 L490 1190" class="line" stroke-width="170" opacity=".4"/>
      <ellipse cx="575" cy="1205" rx="135" ry="135" opacity=".88"/>
      <circle cx="580" cy="1320" r="70" opacity=".5"/>
      <circle cx="920" cy="1180" r="110" opacity=".58"/>
      <ellipse cx="990" cy="1262" rx="135" ry="135" opacity=".82"/>
      <path d="M1040 1320 L1130 1370" class="line" stroke-width="190" opacity=".6"/>
      <path d="M1120 1285 C1200 1230 1330 1260 1400 1340 C1480 1390 1490 1450 1580 1470 L1700 1650 L1130 1650 C1060 1520 1060 1380 1120 1285Z"/>
    </g>
  </g>
  <rect width="5" height="590" fill="url(#edge)"/>
  <rect y="590" width="5" height="568" fill="#d4d0d0"/>
  <rect x="1862" width="2" height="1158" fill="#e8e6e4"/>
</svg>

<aside class="cards">
  <section class="card card-stops">
    <h2 class="pill pill-stops"><span class="wide">Στάσεις Αστικού χωρίς<br>συνωστισμό</span></h2>
    <div class="stops">
      <div class="stop stop-head"><span class="name">Όνομα</span><svg class="person"><use href="#person"/></svg></div>
      <div class="stop"><span class="name">1. Στάση 1</span><span class="count">(14)</span></div>
      <div class="stop"><span class="name">2. Στάση 2</span><span class="count">(11)</span></div>
    </div>
  </section>
  <section class="card card-restaurant">
    <h2 class="pill pill-restaurant"><span class="wide">Εστιατόριο</span></h2>
    <svg class="person"><use href="#person"/></svg>
    <span class="count">(14)</span>
    <div class="ticks"><i></i><i></i></div>
  </section>
  <section class="card card-park">
    <h2 class="pill pill-park"><span class="wide">Πάρκο Ειρήνης</span></h2>
    <svg class="person"><use href="#person"/></svg>
    <span class="count">(14)</span>
    <div class="ticks"><i></i><i></i></div>
  </section>
</aside>
</main>
</body>
</html>
```
FILE: styles.css
```css
* { box-sizing: border-box; }

body {
  margin: 0;
  width: 3544px;
  height: 2200px;
  overflow: hidden;
  background: #880015;
  color: #000;
  font-family: Carlito, Calibri, Lato, "Open Sans", sans-serif;
  font-weight: 700;
}

.sprite { display: none; }

.header { height: 384px; padding: 118px 0 0 1383px; }
.title { margin: 0; font-size: 95px; line-height: 100px; }
.wide-title { display: inline-block; transform: scaleX(1.01); transform-origin: left; }

.tabs { display: flex; align-items: flex-start; height: 406px; padding-left: 259px; }
.tab {
  position: relative;
  width: 771px;
  height: 313px;
  border: 0;
  border-radius: 107px / 46px;
  background: #bdbdbd;
  color: #000;
  font: inherit;
  font-size: 63.5px;
  line-height: 60px;
  text-align: left;
  text-shadow: 1px 1px 0 rgba(255, 255, 255, .7);
  display: flex;
  align-items: flex-start;
}
.tab span { transform: scaleX(1.01); transform-origin: left; }
/* hairline outline, light on the right and dark on the left */
.tab::before, .tab::after {
  content: "";
  position: absolute;
  inset: -4px -6px -4px -5px;
  border: 1px solid #fff;
  border-color: rgba(255, 255, 255, .3) rgba(255, 255, 255, .85);
  border-radius: 112px / 50px;
}
.tab::before { border-color: rgba(32, 0, 4, .4) #200004; clip-path: inset(0 calc(100% - 112px) 0 0); }
.tab::after { clip-path: inset(0 0 0 calc(100% - 112px)); }
.tab-heatmaps { margin-top: 3px; padding: 122px 0 0 210px; background: #7f7f7f; }
.tab-heatmaps::before { clip-path: inset(0 calc(100% - 112px) 0 28px); }
.tab-insights { margin-left: 29px; padding: 126px 0 0 267px; }
.tab-predictions { margin: 7px 0 0 38px; padding: 119px 0 0 213px; }

.content { display: flex; align-items: flex-start; padding-left: 424px; }
.map { display: block; flex: none; overflow: hidden; }

.block { fill: #d9d0c9; stroke: #c6b8ac; stroke-width: 4px; }
.row-edge, .row-face, .street-edge, .street-face, .avenue-edge, .avenue-face { fill: none; }
.row-edge { stroke: #c6b8ac; stroke-width: 35px; stroke-dasharray: 31 9; }
.row-face { stroke: #d9d0c9; stroke-width: 27px; stroke-dasharray: 23 17; stroke-dashoffset: -4; }
.street-edge { stroke: #cfcfcf; stroke-width: 27px; stroke-linecap: round; stroke-linejoin: round; }
.street-face { stroke: #fff; stroke-width: 20px; stroke-linecap: round; stroke-linejoin: round; }
.avenue-edge { stroke: #bbb; stroke-width: 52px; stroke-linejoin: round; }
.avenue-face { stroke: #fff; stroke-width: 45px; stroke-linejoin: round; }
.footway { fill: none; stroke: #fa8072; stroke-width: 8px; stroke-dasharray: 9 13; }
.railway { fill: none; stroke: #8a7ab0; stroke-width: 6px; stroke-dasharray: 30 8; }
.casing { fill: none; stroke: #8a8a80; stroke-width: 3px; }
.parcel { fill: none; stroke: #c4c4c4; stroke-width: 5px; }
.heat .line { fill: none; stroke: #000; stroke-linecap: round; stroke-linejoin: round; }
.haze { fill: #2020e8; opacity: .85; }
.haze path { fill: none; stroke: #2020e8; stroke-linecap: round; stroke-linejoin: round; }

.labels text { font-family: "Noto Sans", sans-serif; font-weight: 400; text-anchor: middle; paint-order: stroke; stroke: rgba(255, 255, 255, .6); stroke-width: 3px; }
.labels .poi { font-size: 21.5px; fill: #a07830; }
.labels .hamlet { font-size: 21px; fill: #333; }
.labels .place { font-size: 21.5px; fill: #444; }
.labels .quiet { font-size: 20.5px; font-style: italic; fill: #777; }
.labels .clinic { font-size: 20px; fill: #bf0040; }
.labels .road { font-size: 21px; fill: #333; stroke-width: 0; }
.labels .garden { font-size: 20px; font-style: italic; fill: #388858; }
.labels .town { font-size: 32px; fill: #666; }
.labels .om { font-size: 31px; font-weight: 700; fill: #000; stroke-width: 0; }
.arrow { fill: #222; stroke: #222; stroke-width: 1.5px; }

.cards { display: flex; flex-direction: column; gap: 19px; margin: 26px 0 0 268px; }
.card { width: 622px; height: 371px; background: #bdbdbd; }
.card-restaurant { width: 621px; margin-left: 2px; }
.card-park { margin-left: 3px; }

.pill {
  margin: 0;
  border: 5px solid #000;
  background: #ed5862;
  font-size: 41px;
  white-space: nowrap;
}
.wide { display: inline-block; transform: translateY(-3px) scaleX(1.19); transform-origin: left; }
.card-stops { padding-top: 24px; }
.pill-stops {
  width: 507px;
  height: 133px;
  margin-left: 56px;
  padding: 12px 0 0 23px;
  border-width: 4px;
  border-radius: 71px / 23px;
  line-height: 51px;
}
.stops { padding: 10px 0 0 98px; font-size: 47px; line-height: 58px; }
.stop { display: flex; }
.stop .name { width: 354px; transform: scaleX(1.015); transform-origin: left; }
.stop-head { height: 60px; }
.stop-head .name { width: 378px; padding-left: 20px; transform: none; }

.person { display: block; width: 49px; height: 50px; }
.stop-head .person { margin-top: 1px; }

.count { display: block; font-size: 47px; line-height: 58px; transform: scaleX(1.035); transform-origin: left; }

.card-restaurant { padding-top: 34px; }
.pill-restaurant { width: 253px; height: 104px; margin-left: 179px; padding-left: 3px; border-radius: 33px / 17px; line-height: 91px; }
.card-restaurant .person { margin: 50px 0 0 276px; }
.card-restaurant .count { margin: 9px 0 0 253px; }
.card-restaurant .ticks { margin: 12px 0 0 260px; }

.card-park { padding-top: 35px; }
.pill-park { width: 336px; height: 105px; margin-left: 151px; padding: 2px 0 0 3px; border-radius: 44px / 18px; line-height: 94px; }
.card-park .person { margin: 37px 0 0 302px; }
.card-park .count { margin: 9px 0 0 279px; }
.card-park .ticks { margin: 12px 0 0 286px; }

.ticks { display: flex; gap: 54px; }
.ticks i { width: 6px; height: 2px; background: #000; }
```
